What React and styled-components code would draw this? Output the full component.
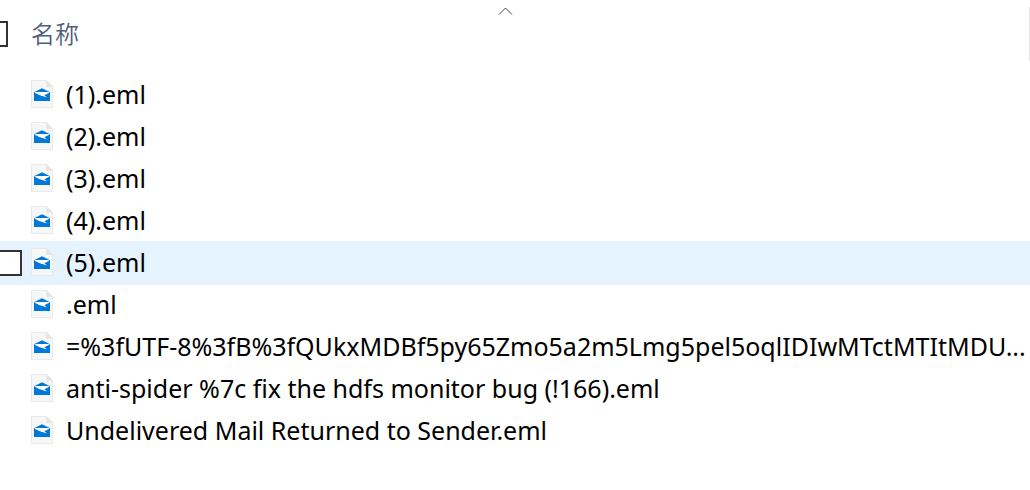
import React from "react";
import styled, { createGlobalStyle } from "styled-components";

const Global = createGlobalStyle`
  * { box-sizing: border-box; }
  body { margin: 0; background: #fff; color: #000; font-family: "Noto Sans", "Noto Sans CJK SC", sans-serif; overflow-x: hidden; }
`;
const Header = styled.header`
  position: relative;
  display: flex;
  align-items: center;
  height: 68px;
  margin-bottom: 6px;
`;
const HeaderButton = styled.button`
  border: 0;
  padding: 0 0 2px;
  margin-left: 23px;
  background: none;
  color: #4c607a;
  font: 350 24px/32px "Noto Sans CJK SC", sans-serif;
`;
const SortArrow = styled.svg`
  position: absolute;
  top: 7px;
  left: 0;
  right: 20px;
  margin: 0 auto;
`;
const Edge = styled.span`
  position: absolute;
  right: 0;
  top: 7px;
  width: 1px;
  height: 54px;
  background: #e5e5e5;
`;
const Check = styled.input`
  appearance: none;
  flex: none;
  width: 26px;
  height: 26px;
  margin: 0 0 0 ${(p) => (p.$header ? "-18px" : "-4px")};
  border: 2px solid #333;
  background: #fff;
`;
const List = styled.ul`
  list-style: none;
  margin: 0;
  padding: 0;
`;
const Row = styled.li`
  display: flex;
  align-items: center;
  height: 42px;
  background: ${(p) => (p.$hover ? "#e5f3ff" : "transparent")};
  box-shadow: ${(p) => (p.$hover ? "0 0 0 1px #e5f3ff" : "none")};
`;
const CheckSlot = styled.span`
  display: flex;
  flex: none;
  width: 31px;
`;
const Icon = styled.svg`
  flex: none;
  margin-right: 13px;
  margin-bottom: 2px;
`;
const Name = styled.span`
  flex: 1;
  min-width: 0;
  padding-bottom: 2px;
  font-size: 25px;
  line-height: 32px;
  white-space: nowrap;
`;

const files = [
  "(1).eml", "(2).eml", "(3).eml", "(4).eml", "(5).eml", ".eml",
  "=%3fUTF-8%3fB%3fQUkxMDBf5py65Zmo5a2m5Lmg5pel5oqlIDIwMTctMTItMDU...",
  "anti-spider %7c fix the hdfs monitor bug (!166).eml",
  "Undelivered Mail Returned to Sender.eml",
];

function MailFileIcon() {
  return (
    <Icon width="22" height="28" viewBox="0 0 22 28" aria-hidden="true">
      <path d="M.5.5H15.5L21.5 6.5V27.5H.5Z" fill="#f6f7f8" stroke="#e9e9e9" />
      <path d="M15.5.5V6.5H21.5Z" fill="#e6e6e6" stroke="#e0e0e0" strokeWidth=".5" />
      <path d="M3 12.2L11 8.2L19 12.2V21H3Z" fill="#0078d7" />
      <path d="M3.8 12H18.2V12.8L13.4 15.2L16 17.6L8.2 15L3.8 12.8Z" fill="#fff" />
    </Icon>
  );
}

export default function App() {
  return (
    <main>
      <Global />
      <Header>
        <Check type="checkbox" aria-label="全选" $header />
        <HeaderButton>名称</HeaderButton>
        <SortArrow width="15" height="9" fill="none" stroke="#444"><path d="M1 7.5L7.5 1L14 7.5" /></SortArrow>
        <Edge />
      </Header>
      <List>
        {files.map((f) => (
          <Row key={f} $hover={f === "(5).eml"}>
            <CheckSlot>{f === "(5).eml" && <Check type="checkbox" aria-label={f} />}</CheckSlot>
            <MailFileIcon />
            <Name>{f}</Name>
          </Row>
        ))}
      </List>
    </main>
  );
}
